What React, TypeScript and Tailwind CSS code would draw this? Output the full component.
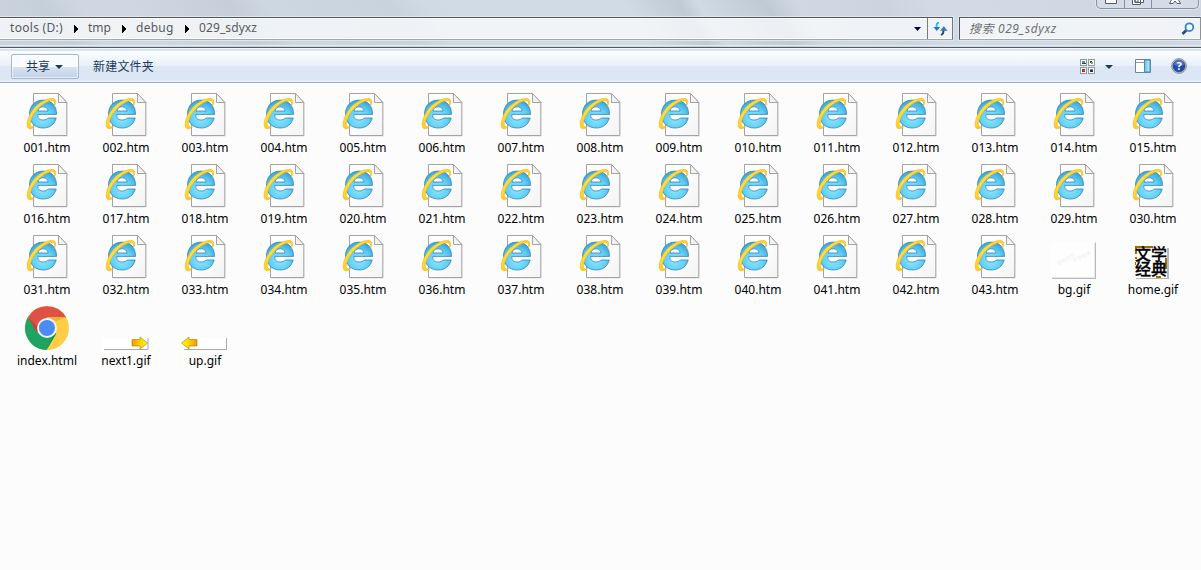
import React from "react";

const pageFiles = Array.from({ length: 43 }, (_, i) => `${String(i + 1).padStart(3, "0")}.htm`);
const files = [...pageFiles, "bg.gif", "home.gif", "index.html", "next1.gif", "up.gif"];

function HtmIcon() {
  return (
    <svg width="48" height="48" viewBox="0 0 48 48">
      <path d="M12 5H36L45.5 14V48H12Z" fill="#ececec" />
      <path d="M11.5 4.5H36.5L44.8 13.5V46.5H11.5Z" fill="url(#paper)" stroke="#a3a3a3" />
      <path d="M36.5 4.5V13.5H44.8Z" fill="#f3f3f3" stroke="#a3a3a3" />
      <g transform="translate(0.6 0.4)">
        <path
          d="M33.9 25H15.2V26C15.2 28.6 16.8 30.6 20.6 30.6C23 30.6 24.7 29.8 25.6 28.6H33.6C32 34.9 27.2 38.6 20.7 38.6C12.6 38.6 6.9 33.2 6.9 24.8C6.9 16.3 12.6 10.7 20.7 10.7C28.8 10.7 34.1 16.4 33.9 25ZM15.4 21.6H25.5C25.2 18.9 23.4 17.4 20.5 17.4C17.5 17.4 15.7 19 15.4 21.6Z"
          fill="url(#eblue)" stroke="#2b87bd" strokeWidth="0.8" fillRule="evenodd"
        />
        <path
          d="M31.6 17C33.7 13.5 33.8 9.9 30.6 9.2C24.5 8.2 14.8 13.7 9.6 21.3C5 28 3.1 36.2 5.8 38.8C7.2 40.1 9.6 39.2 12 37.4C9.3 38.1 7.6 37.3 7.6 34.6C7.8 29.6 11.6 22.9 16.8 17.9C22.1 12.9 28.2 10.5 30.9 11.7C32.4 12.4 32.3 14.5 31.6 17Z"
          fill="url(#ring)" stroke="#eeb11d" strokeWidth="0.6"
        />
      </g>
    </svg>
  );
}

function ChromeIcon() {
  return (
    <svg width="48" height="48" viewBox="0 0 48 48" className="translate-y-[3px] overflow-visible">
      <circle cx="25" cy="23.1" r="22" fill="#ffcd46" />
      <path d="M6 12A22 22 0 0 0 24.5 45.1L34.2 28.6L25 23L15.5 28.4Z" fill="#1da362" />
      <path d="M5.9 12.2A22 22 0 0 1 44.1 12.3H25L15.5 28.6Z" fill="#de5246" />
      <path d="M15.5 28.6L5.9 12.2L16 22.5Z" fill="#bd4238" />
      <path d="M25 12.3H44.1L34.5 16Z" fill="#e5b641" />
      <path d="M34.2 28.6L24.5 45.1L31 31Z" fill="#14865a" />
      <circle cx="25" cy="23" r="10" fill="#f1f1f1" />
      <circle cx="25" cy="23" r="8" fill="#4b8bf4" />
    </svg>
  );
}

function BgIcon() {
  return (
    <svg width="48" height="48" viewBox="0 0 48 48">
      <path d="M2 11H46V48H2Z" fill="#fefefe" />
      <path d="M46.5 11.5V47.5M3 47.5H47" stroke="#b9b9b9" fill="none" />
      <path d="M45.5 12V46.5H3" stroke="#e9e9e9" fill="none" />
      <g transform="rotate(-27 25 26)" fill="#f0f0f0" fontFamily='"Noto Sans CJK SC", sans-serif' fontSize="5">
        <text x="7" y="26">品味文学</text>
        <text x="22" y="31">文学经典</text>
      </g>
    </svg>
  );
}

function HomeIcon() {
  return (
    <svg width="48" height="48" viewBox="0 0 48 48" shapeRendering="crispEdges">
      <path d="M8 17H41V49H8Z" fill="#b8b8b8" />
      <path d="M7 15H39V47H7Z" fill="#fff" />
      <path d="M7 15H25V17H9V23H7ZM7 26H9V28H7ZM37 27H39V38H35V36H37ZM28 45H33V47H28ZM7 31H8V34H7Z" fill="#a16900" />
      <g fill="#000" fontFamily='"Noto Sans CJK SC", sans-serif' fontWeight="500" fontSize="16" stroke="#000" strokeWidth="0.3">
        <text x="7" y="29" textLength="32">文学</text>
        <text x="7" y="44" textLength="32">经典</text>
      </g>
    </svg>
  );
}

function ArrowIcon({ next }: { next: boolean }) {
  return (
    <svg width="48" height="48" viewBox="0 0 48 48">
      <path d="M2 36H46V47H2Z" fill="#fff" />
      <path d={next ? "M3 47.5H47V36" : "M4 47.5H47M46.5 36V48"} fill="none" stroke="#aaa" />
      <g transform={next ? "translate(31 35)" : "translate(17 35) scale(-1 1)"}>
        <path d="M0 2.5H8V0L15.5 6L8 12V9H0Z" fill="url(#arrow)" stroke="#9b8508" strokeWidth="0.6" />
      </g>
    </svg>
  );
}

function FileIcon({ name }: { name: string }) {
  if (name.endsWith(".htm")) return <HtmIcon />;
  if (name === "index.html") return <ChromeIcon />;
  if (name === "bg.gif") return <BgIcon />;
  if (name === "home.gif") return <HomeIcon />;
  return <ArrowIcon next={name === "next1.gif"} />;
}

function Triangle({ className }: { className: string }) {
  return (
    <svg className={className} viewBox="0 0 8 4" preserveAspectRatio="none">
      <path d="M0 0H8L4 4Z" fill="currentColor" />
    </svg>
  );
}

function Crumb({ label, className }: { label: string; className: string }) {
  return (
    <div className={`flex shrink-0 items-center whitespace-nowrap ${className}`}>
      <span>{label}</span>
    </div>
  );
}

function CrumbArrow() {
  return (
    <svg className="shrink-0" width="5" height="8" viewBox="0 0 5 8" shapeRendering="crispEdges">
      <path d="M0 0L4.5 4L0 8Z" fill="#000" />
    </svg>
  );
}

function Gradients() {
  return (
    <svg width="0" height="0" className="absolute">
      <defs>
        <linearGradient id="paper" x2="1" y2="1">
          <stop stopColor="#fff" />
          <stop offset="0.5" stopColor="#fcfcfc" />
          <stop offset="1" stopColor="#f3f3f3" />
        </linearGradient>
        <radialGradient id="eblue" cx="0.5" cy="0.65" r="0.62">
          <stop stopColor="#90e8fd" />
          <stop offset="0.6" stopColor="#62cff5" />
          <stop offset="1" stopColor="#3ba8dd" />
        </radialGradient>
        <linearGradient id="ring" x2="1" y2="1">
          <stop stopColor="#fff27a" />
          <stop offset="0.45" stopColor="#ffd426" />
          <stop offset="1" stopColor="#f0a90b" />
        </linearGradient>
        <linearGradient id="arrow">
          <stop stopColor="#fa9208" />
          <stop offset="0.6" stopColor="#ffdb05" />
          <stop offset="1" stopColor="#fff500" />
        </linearGradient>
      </defs>
    </svg>
  );
}

export default function App() {
  return (
    <div className="flex h-[570px] w-[1201px] flex-col overflow-hidden bg-[#fcfcfc] font-['Noto_Sans','Noto_Sans_CJK_SC',sans-serif] text-[12px]">
      <Gradients />
      <header className="flex h-[47px] shrink-0 flex-col bg-[linear-gradient(55deg,#ccd5df_0%,#c5cfda_6%,#cfd8e2_9%,#cdd6e1_14%,#c5ced9_21%,#cdd7e1_24%,#c9d3dd_34%,#d0dae4_37%,#d1dbe5_53%,#bfcad4_57.5%,#d0dae4_59%,#c0cad4_64.5%,#d0d9e3_67%,#cbd4df_74%,#d2dbe5_78%,#ced7e1_100%)]">
        <div className="flex h-4 shrink-0 justify-end pr-[2px]">
          <div className="flex h-[9px] w-[103px] overflow-hidden rounded-b-[5px] border border-t-0 border-[#8592a3] bg-[#d4dde7] shadow-[0_0_0_1px_#dfe6ee]">
            <div className="flex w-[28px] justify-center border-r border-[#8592a3]">
              <svg width="14" height="6" viewBox="0 0 14 6"><path d="M1.5 -1V3.5H12.5V-1" fill="#fff" stroke="#555c67" /></svg>
            </div>
            <div className="flex w-[27px] justify-center border-r border-[#8592a3]">
              <svg width="14" height="7" viewBox="0 0 14 7"><path d="M4 -1V2.5H12.5V-1M1.5 -1V4.5H9.5V-1M4 -1V2H7V-1" fill="#fff" stroke="#555c67" /></svg>
            </div>
            <div className="flex flex-1 justify-center">
              <svg width="14" height="6" viewBox="0 0 14 6"><path d="M4 -1L1.5 3.5H5L7 1L9 3.5H12.5L10 -1" fill="#fff" stroke="#555c67" /></svg>
            </div>
          </div>
        </div>
        <div className="flex h-[25px] shrink-0 pt-px">
          <div className="flex h-[23px] w-[953px] shrink-0 border-y border-r border-t-[#50565e] border-b-[#9ea9ac] border-r-[#72787e] bg-white/70 shadow-[0_0_0_1px_#dfe6ec,inset_0_1px_0_#fff,inset_0_-1px_0_#fff]">
            <div className="flex flex-1 items-center text-[12px] text-[#57595d]">
              <Crumb label="tools (D:)" className="ml-[10px] mt-[-2px] w-[64px] tracking-[0.3px]" />
              <CrumbArrow />
              <Crumb label="tmp" className="ml-[9px] mt-[-2px] w-[34px]" />
              <CrumbArrow />
              <Crumb label="debug" className="ml-[8px] mt-[-2px] w-[50px] pl-px tracking-[0.25px]" />
              <CrumbArrow />
              <Crumb label="029_sdyxz" className="ml-[9px] mt-[-2px] w-[70px] tracking-[0.1px]" />
            </div>
            <div className="flex w-[14px] items-center"><Triangle className="mt-px ml-px h-[4px] w-[7px] text-[#00005a]" /></div>
            <div className="flex w-[25px] items-center justify-center border-l border-[#777c82]">
              <svg width="15" height="14" viewBox="0 0 15 14">
                <path d="M6 .5C3.8 .8 3.3 2.3 3.5 5" fill="none" stroke="#2cb9e1" strokeWidth="1.8" />
                <path d="M.3 5H7.2L3.9 9Z" fill="#2874bd" />
                <path d="M10.5 8C10.8 11 10 12 8 13" fill="none" stroke="#253e75" strokeWidth="1.8" />
                <path d="M7 8.8H14.6L10.8 4.2Z" fill="#3779bb" />
              </svg>
            </div>
          </div>
          <div className="ml-[6px] flex h-[23px] flex-1 items-center border border-t-[#50565e] border-r-[#8b9399] border-b-[#9ea9ac] border-l-[#50565e] bg-white/70 pl-[9px] shadow-[0_0_0_1px_#dfe6ec,inset_0_1px_0_#fff,inset_0_-1px_0_#fff]">
            <span className="flex-1 whitespace-nowrap text-[12px] tracking-[0.6px] text-[#6e7174]"><em>搜索 029_sdyxz</em></span>
            <svg className="mr-[5px]" width="14" height="14" viewBox="0 0 14 14">
              <path d="M1.5 12L5.5 8" stroke="#254c83" strokeWidth="2.6" />
              <circle cx="8.4" cy="5.2" r="3.9" fill="#f7fbfd" stroke="#3286c7" strokeWidth="1.8" />
            </svg>
          </div>
        </div>
        <div className="mt-[4px] h-px shrink-0 bg-[#e2e9ef]" />
      </header>
      <div className="h-px shrink-0 bg-[#555960]" />
      <div className="h-px shrink-0 bg-[#f2f7fb]" />
      <div className="h-[2px] shrink-0 bg-[#d9e2f2]" />
      <nav className="flex h-8 shrink-0 items-center border-b border-[#a0afc9] bg-[linear-gradient(#fcfeff_0px,#e7f0fa_15px,#dce6f4_15px,#dce7f5_29px,#e6effa_30px)] text-[12px] text-[#1e395b]">
        <button className="ml-[11px] flex h-[25px] w-[68px] items-center rounded-[2px] border border-[#a7b7ce] bg-[linear-gradient(#f9fcfe_50%,#d8e2f1_50%,#c3d3e9)] pl-[14px] shadow-[inset_0_0_0_1px_#ffffff99]">
          <span>共享</span>
          <Triangle className="ml-[5px] h-[4px] w-[8px] text-[#1e395b]" />
        </button>
        <span className="ml-[14px] tracking-[0.2px]">新建文件夹</span>
        <div className="ml-auto mr-[14px] flex items-center">
          <svg width="15" height="15" viewBox="0 0 15 15" shapeRendering="crispEdges">
            <path d="M.5 .5H6.5V6.5H.5ZM8.5 .5H14.5V6.5H8.5ZM.5 8.5H6.5V14.5H.5ZM8.5 8.5H14.5V14.5H8.5Z" fill="#fff" stroke="#9299a5" />
            <path d="M2 2H5V4H2ZM10 10H13V13H10Z" fill="#4c91b8" />
            <path d="M2 4H6V5H2ZM10 2H12V4H10Z" fill="#145b32" />
            <path d="M11 3H13V5H11Z" fill="#86ad25" />
            <path d="M2 10H5V13H2Z" fill="#a92a0b" />
            <path d="M3 11H5V12H3Z" fill="#c9601c" />
            <path d="M10 11H13V13H10Z" fill="#342e4d" />
          </svg>
          <Triangle className="ml-[10px] h-[4px] w-[8px] text-[#1e395b]" />
          <svg className="ml-[22px] mt-[-1px]" width="16" height="14" viewBox="0 0 16 14">
            <path d="M.5 .5H15.5V13.5H.5Z" fill="#fff" stroke="#70839b" />
            <path d="M1 3.5H9" stroke="#8b9aab" />
            <path d="M9.5 1H15V13H9.5Z" fill="url(#pane)" stroke="#3d92b5" />
            <defs><linearGradient id="pane"><stop stopColor="#73bdd8" /><stop offset="1" stopColor="#c1edf7" /></linearGradient></defs>
          </svg>
          <svg className="ml-[20px] mt-[-1px]" width="16" height="16" viewBox="0 0 16 16">
            <circle cx="8" cy="8" r="7.4" fill="#d8dadd" stroke="#8c9199" />
            <circle cx="8" cy="8" r="6.1" fill="#2449a8" stroke="#17398b" strokeWidth=".6" />
            <path d="M3 7A5 5 0 0 1 13 7Q8 9 3 7" fill="#4e74cc" />
            <text x="8" y="12" textAnchor="middle" fontSize="11" fontWeight="700" fill="#fff">?</text>
          </svg>
        </div>
      </nav>
      <main className="grid grid-cols-[repeat(15,79px)] auto-rows-[71px] pl-[7px] pt-[6px] text-black">
        {files.map((name) => (
          <div key={name} className="flex flex-col">
            <div className="ml-[15px] h-12 w-12"><FileIcon name={name} /></div>
            <span className="h-[22px] pl-px text-center leading-[22px]">{name}</span>
          </div>
        ))}
      </main>
    </div>
  );
}
